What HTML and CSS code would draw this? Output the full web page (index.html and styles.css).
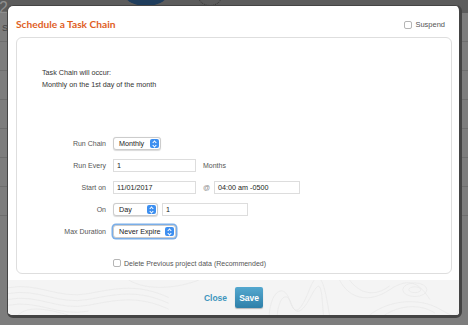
FILE: index.html
```html
<!DOCTYPE html>
<html lang="en">
<head>
    <meta charset="UTF-8">
    <meta name="viewport" content="width=device-width, initial-scale=1.0">
    <title>Schedule a Task Chain</title>
    <link rel="stylesheet" href="styles.css">
</head>
<body>
    <div class="page">
        <div class="page-top">
            <span class="page-num">2</span>
            <span class="page-avatar"></span>
            <span class="page-ring"></span>
        </div>
        <div class="page-row">St</div>
        <div class="page-row"></div>
        <div class="page-row"></div>
        <div class="page-row"></div>
        <div class="page-row"></div>
        <div class="page-row"></div>
        <div class="page-row"></div>
    </div>

    <div class="modal">
        <div class="modal-header">
            <h1 class="modal-title">Schedule a Task Chain</h1>
            <label class="suspend">
                <span class="checkbox"></span>
                Suspend
            </label>
        </div>

        <div class="panel">
            <div class="summary">
                <p>Task Chain will occur:</p>
                <p>Monthly on the 1st day of the month</p>
            </div>

            <div class="form">
                <div class="row">
                    <span class="label">Run Chain</span>
                    <span class="select select-monthly">Monthly<span class="arrows"></span></span>
                </div>
                <div class="row">
                    <span class="label">Run Every</span>
                    <span class="input input-short">1</span>
                    <span class="unit">Months</span>
                </div>
                <div class="row">
                    <span class="label">Start on</span>
                    <span class="input input-short">11/01/2017</span>
                    <span class="at">@</span>
                    <span class="input input-long">04:00 am -0500</span>
                </div>
                <div class="row">
                    <span class="label">On</span>
                    <span class="select select-day">Day<span class="arrows"></span></span>
                    <span class="input input-long">1</span>
                </div>
                <div class="row">
                    <span class="label">Max Duration</span>
                    <span class="select select-expire focused">Never Expire<span class="arrows"></span></span>
                </div>
            </div>

            <label class="delete-row">
                <span class="checkbox"></span>
                Delete Previous project data (Recommended)
            </label>
        </div>

        <div class="modal-footer">
            <svg class="topo" viewBox="0 0 449 36" preserveAspectRatio="none">
                <g fill="none" stroke="#e6e6e6" stroke-width="0.6">
                    <path d="M0 8 C30 2 50 20 80 14 S130 4 160 18"/>
                    <path d="M0 14 C30 8 50 26 80 20 S130 10 160 24"/>
                    <path d="M0 20 C30 14 50 32 80 26 S130 16 160 30"/>
                    <path d="M0 26 C30 20 50 38 80 32"/>
                    <path d="M10 36 C20 26 40 30 60 36"/>
                    <path d="M120 0 C140 12 170 8 190 0"/>
                    <path d="M260 36 C262 10 275 4 280 20 S290 36 300 10 S315 2 320 36"/>
                    <path d="M268 36 C270 16 278 12 282 24 S292 36 302 16 S312 10 314 36"/>
                    <path d="M330 0 C340 20 360 24 380 10 S410 4 420 20"/>
                    <path d="M340 0 C350 14 365 18 380 6"/>
                    <path d="M360 36 C380 20 410 18 430 30 S445 36 449 30"/>
                    <path d="M375 36 C390 26 410 24 425 34"/>
                    <ellipse cx="405" cy="10" rx="12" ry="7"/>
                    <ellipse cx="405" cy="10" rx="6" ry="3"/>
                </g>
            </svg>
            <a class="close-link">Close</a>
            <button class="save-btn">Save</button>
        </div>
    </div>
</body>
</html>
```

FILE: styles.css
```css
body {
    margin: 0;
    width: 468px;
    height: 325px;
    overflow: hidden;
    background: #7d7d7d;
    font-family: "Liberation Sans", Arial, sans-serif;
    position: relative;
}

.page-top {
    height: 13px;
    background: #5c5c5c;
    position: relative;
}

.page-num {
    position: absolute;
    left: -1px;
    top: 0;
    font-size: 16px;
    color: #8e8e8e;
    line-height: 16px;
}

.page-avatar {
    position: absolute;
    left: 124px;
    top: -20px;
    width: 44px;
    height: 26px;
    border-radius: 50%;
    background: #1f3d5c;
}

.page-ring {
    position: absolute;
    left: 198px;
    top: -14px;
    width: 22px;
    height: 18px;
    border-radius: 50%;
    border: 1px dotted #333;
}

.page-row {
    height: 28px;
    border-bottom: 1px solid #6e6e6e;
    color: #444;
    font-size: 9px;
    line-height: 30px;
    padding-left: 2px;
}

.modal {
    position: absolute;
    left: 7px;
    top: 5px;
    width: 451px;
    height: 309px;
    background: #fff;
    border: 1px solid #444;
    border-right-width: 3px;
    border-bottom-width: 3px;
    border-radius: 6px;
    display: flex;
    flex-direction: column;
    overflow: hidden;
}

.modal-header {
    display: flex;
    align-items: center;
    justify-content: space-between;
    height: 31px;
    padding: 0 14px 0 8px;
}

.modal-title {
    margin: 0;
    font-family: Lato, "Open Sans", sans-serif;
    font-size: 10.2px;
    font-weight: bold;
    color: #e0601f;
    padding-top: 4px;
}

.suspend {
    display: flex;
    align-items: center;
    gap: 3px;
    font-size: 7.5px;
    color: #555;
    padding-top: 6px;
}

.checkbox {
    width: 6px;
    height: 6px;
    border: 1px solid #b5b5b5;
    border-radius: 2px;
    background: #fff;
}

.panel {
    margin: 0 7px 0 8px;
    height: 235px;
    border: 1px solid #dedede;
    border-radius: 6px;
    padding: 0 0 0 25px;
    display: flex;
    flex-direction: column;
}

.summary {
    padding-top: 31px;
    font-size: 7.2px;
    color: #333;
}

.summary p {
    margin: 0 0 4px;
    line-height: 8px;
}

.form {
    margin-top: 44px;
    display: flex;
    flex-direction: column;
    gap: 9px;
}

.row {
    display: flex;
    align-items: center;
    height: 13px;
    font-size: 7px;
    color: #555;
}

.label {
    width: 64px;
    margin-right: 7px;
    text-align: right;
    color: #555;
}

.input {
    height: 11px;
    line-height: 11px;
    border: 1px solid #ddd;
    padding: 0 3px;
    color: #222;
    font-size: 7.2px;
}

.input-short {
    width: 75px;
}

.input-long {
    width: 78px;
}

.unit {
    margin-left: 7px;
    color: #555;
}

.at {
    margin: 0 4px 0 7px;
    color: #888;
}

.select {
    position: relative;
    height: 11px;
    line-height: 11px;
    border: 1px solid #ccc;
    border-radius: 3px;
    padding: 0 0 0 5px;
    color: #222;
    font-size: 7.2px;
    background: #fff;
    box-shadow: 0 0.5px 1px rgba(0, 0, 0, 0.15);
}

.select-monthly {
    width: 41px;
}

.select-day {
    width: 38px;
    margin-right: 4px;
}

.select-expire {
    width: 56px;
}

.select.focused {
    box-shadow: 0 0 0 1.5px #7aaee8;
}

.arrows {
    position: absolute;
    right: 1px;
    top: 1px;
    width: 9px;
    height: 9px;
    border-radius: 2px;
    background: #3d8ff0;
}

.arrows::before,
.arrows::after {
    content: "";
    position: absolute;
    left: 3px;
    width: 2px;
    height: 2px;
    border-left: 1px solid #fff;
    border-top: 1px solid #fff;
}

.arrows::before {
    top: 2px;
    transform: rotate(45deg);
}

.arrows::after {
    top: 5px;
    transform: rotate(225deg);
}

.delete-row {
    display: flex;
    align-items: center;
    gap: 3px;
    margin: auto 0 6px 71px;
    font-size: 7px;
    color: #555;
}

.modal-footer {
    position: relative;
    margin-top: 6px;
    flex: 1;
    background: #f4f4f4;
    display: flex;
    align-items: center;
    justify-content: center;
    gap: 8px;
}

.topo {
    position: absolute;
    left: 0;
    top: 0;
    width: 100%;
    height: 100%;
}

.close-link {
    position: relative;
    font-size: 8.5px;
    font-weight: bold;
    color: #3f95bd;
}

.save-btn {
    position: relative;
    width: 28px;
    height: 21px;
    padding: 0;
    border: none;
    border-radius: 2px;
    background: linear-gradient(#54a8cf, #2f80a9);
    color: #fff;
    font-family: "Liberation Sans", Arial, sans-serif;
    font-size: 8.5px;
    font-weight: bold;
    box-shadow: 0 1px 1px rgba(0, 0, 0, 0.25);
}
```
